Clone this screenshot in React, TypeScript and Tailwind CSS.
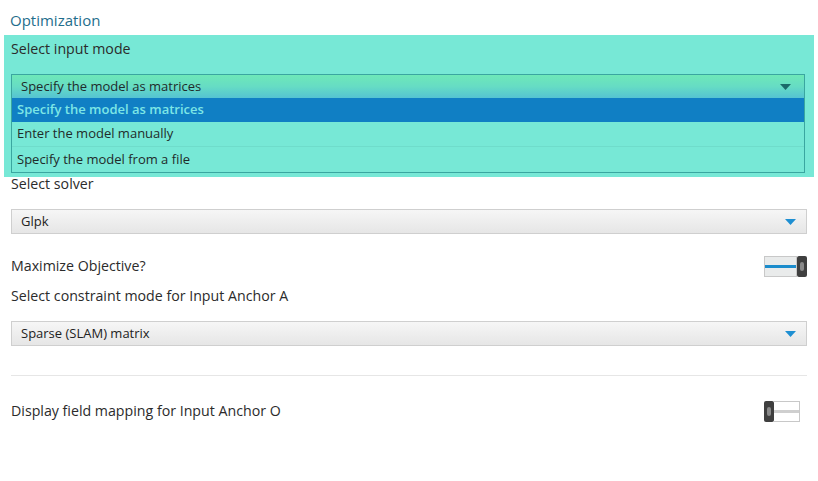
import React from 'react';

const font = { fontFamily: '"Open Sans", "Noto Sans", sans-serif' };

const Caret = ({ className }: { className?: string }) => (
  <svg className={className} width="11" height="6" viewBox="0 0 11 6">
    <path d="M0 0h11L5.5 6z" fill="currentColor" />
  </svg>
);

const Select = ({ value }: { value: string }) => (
  <div className="flex h-[25px] items-center justify-between border border-[#cfcfcf] bg-gradient-to-b from-[#f6f6f6] to-[#e6e6e6] pl-[9px] pr-[10px] text-[13px] text-[#222]">
    <span>{value}</span>
    <Caret className="text-[#1e8fd2]" />
  </div>
);

const Toggle = ({ on }: { on: boolean }) =>
  on ? (
    <div className="flex h-[21px] w-[43px] items-stretch">
      <div className="flex flex-1 items-center border border-[#c8c8c8] bg-[#e9ebeb]">
        <div className="h-[3px] w-full bg-[#1b8ccc]" />
      </div>
      <div className="flex w-[10px] items-center justify-center rounded-[2px] bg-[#3f3f3f]">
        <div className="h-[9px] w-[4px] rounded-full bg-[#8a8a8a]" />
      </div>
    </div>
  ) : (
    <div className="flex h-[21px] w-[36px] items-stretch">
      <div className="flex w-[10px] items-center justify-center rounded-[2px] bg-[#3f3f3f]">
        <div className="h-[9px] w-[4px] rounded-full bg-[#8a8a8a]" />
      </div>
      <div className="flex flex-1 items-center border border-l-0 border-[#c8c8c8] bg-white">
        <div className="h-[3px] w-full bg-[#cfcfcf]" />
      </div>
    </div>
  );

export default function App() {
  return (
    <div className="h-[481px] w-[818px] bg-white text-[#2b2b2b]" style={font}>
      <div className="px-[10px] pt-[9px] text-[15px] leading-[22px] text-[#1f6e8c]">Optimization</div>

      <div className="mx-[4px] mt-[4px] h-[142px] w-[810px] bg-[#77e8d6] px-[7px] pt-[3px]">
        <div className="text-[14.2px] leading-[22px]">Select input mode</div>
        <div className="mt-[14px] mr-[2px] border border-[#3aa6a0]">
          <div className="flex h-[23px] items-center justify-between bg-gradient-to-b from-[#6ee8b8] via-[#66dcc4] to-[#55c3d2] pl-[9px] pr-[13px] text-[13px] text-[#1f2b2a]">
            <span>Specify the model as matrices</span>
            <Caret className="text-[#1b6a6a]" />
          </div>
          <div className="flex h-[24px] items-center bg-[#107fc4] pl-[5px] text-[13px] font-semibold text-[#7de6e6]">
            Specify the model as matrices
          </div>
          <div className="flex h-[25px] items-center border-b border-[#6fdccb] pl-[5px] text-[13px] text-[#1f2b2a]">
            Enter the model manually
          </div>
          <div className="flex h-[25px] items-center pl-[5px] text-[13px] text-[#1f2b2a]">
            Specify the model from a file
          </div>
        </div>
      </div>

      <div className="px-[11px]">
        <div className="-mt-[4px] text-[14.2px] leading-[22px]">Select solver</div>
        <div className="mt-[14px]">
          <Select value="Glpk" />
        </div>

        <div className="mt-[21px] flex items-center justify-between">
          <span className="text-[14.2px] leading-[22px]">Maximize Objective?</span>
          <Toggle on />
        </div>

        <div className="mt-[8px] text-[14.2px] leading-[22px]">Select constraint mode for Input Anchor A</div>
        <div className="mt-[14px]">
          <Select value="Sparse (SLAM) matrix" />
        </div>

        <div className="mt-[29px] h-px bg-[#e6e6e6]" />

        <div className="mt-[24px] flex items-center justify-between pr-[7px]">
          <span className="text-[14.2px] leading-[22px]">Display field mapping for Input Anchor O</span>
          <Toggle on={false} />
        </div>
      </div>
    </div>
  );
}
